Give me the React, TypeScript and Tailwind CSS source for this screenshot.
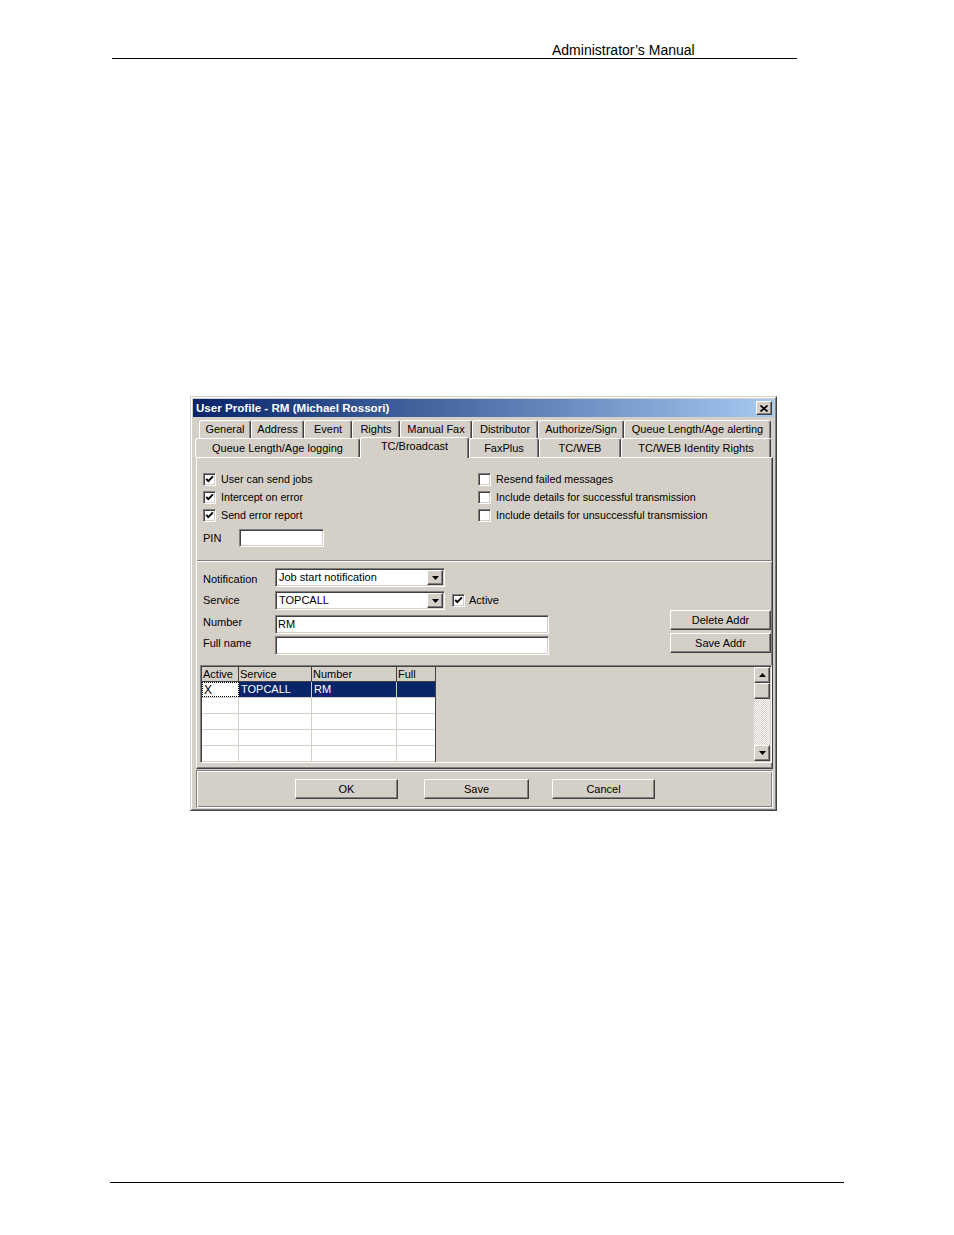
import React from "react";

const raised =
  "border border-t-white border-l-white border-r-[#404040] border-b-[#404040] shadow-[inset_-1px_-1px_0_#808080]";
const sunken =
  "border border-t-[#808080] border-l-[#808080] border-r-white border-b-white shadow-[inset_1px_1px_0_#404040,inset_-1px_-1px_0_#d4d0c8]";

function Check({ checked }: { checked?: boolean }) {
  return (
    <div className={`w-[13px] h-[13px] bg-white shrink-0 flex items-center justify-center ${sunken}`}>
      {checked && (
        <svg width="9" height="9" viewBox="0 0 9 9">
          <path d="M1.2 3.8 L3.3 6.1 L7.9 1.4" stroke="#000" strokeWidth="1.9" fill="none" />
        </svg>
      )}
    </div>
  );
}

function DownTri() {
  return (
    <svg width="7" height="4" viewBox="0 0 7 4">
      <path d="M0 0 H7 L3.5 4 Z" fill="#000" />
    </svg>
  );
}
function UpTri() {
  return (
    <svg width="7" height="4" viewBox="0 0 7 4">
      <path d="M0 4 H7 L3.5 0 Z" fill="#000" />
    </svg>
  );
}

function Combo({ value }: { value: string }) {
  return (
    <div className={`h-[19px] w-[170px] bg-white flex items-stretch p-[1px] ${sunken}`}>
      <div className="flex-1 pl-[2px] flex items-center text-[11px] leading-none">{value}</div>
      <div className={`w-[16px] bg-[#d4d0c8] flex items-center justify-center ${raised}`}>
        <DownTri />
      </div>
    </div>
  );
}

function Btn({ label, w }: { label: string; w: string }) {
  return (
    <div className={`${w} h-[20px] bg-[#d4d0c8] flex items-center justify-center text-[11px] leading-none ${raised}`}>
      {label}
    </div>
  );
}

const row1 = [
  { l: "General", w: "w-[52px]" },
  { l: "Address", w: "w-[53px]" },
  { l: "Event", w: "w-[48px]" },
  { l: "Rights", w: "w-[48px]" },
  { l: "Manual Fax", w: "w-[72px]" },
  { l: "Distributor", w: "w-[66px]" },
  { l: "Authorize/Sign", w: "w-[86px]" },
  { l: "Queue Length/Age alerting", w: "w-[147px]" },
];
const row2 = [
  { l: "Queue Length/Age logging", w: "w-[165px]", sel: false },
  { l: "TC/Broadcast", w: "w-[109px]", sel: true },
  { l: "FaxPlus", w: "w-[70px]", sel: false },
  { l: "TC/WEB", w: "w-[82px]", sel: false },
  { l: "TC/WEB Identity Rights", w: "w-[150px]", sel: false },
];

const tabBase =
  "h-full flex items-center justify-center text-[11px] leading-none border-t border-l border-r border-t-white border-l-white border-r-[#404040] shadow-[inset_-1px_0_0_#808080] rounded-t-[3px] bg-[#d4d0c8]";

export default function App() {
  return (
    <div className="w-[954px] h-[1235px] bg-white flex flex-col font-['Liberation_Sans',Arial,sans-serif] text-black">
      {/* page header */}
      <div className="pt-[42px] ml-[112px] w-[685px] border-b border-black">
        <div className="pl-[440px] h-[16px] text-[14px] leading-[16px]">Administrator’s Manual</div>
      </div>

      {/* dialog */}
      <div className="mt-[337px] ml-[190px] w-[587px] h-[415px] bg-[#d4d0c8] border border-t-[#d4d0c8] border-l-[#d4d0c8] border-r-[#404040] border-b-[#404040]">
        <div className="w-full h-full border border-t-white border-l-white border-r-[#808080] border-b-[#808080] p-[1px] flex flex-col">
          {/* title bar */}
          <div className="h-[18px] shrink-0 bg-linear-to-r from-[#0a246a] to-[#a6caf0] flex items-center">
            <div className="pl-[3px] text-white font-bold text-[11.6px] leading-none flex-1">
              User Profile - RM (Michael Rossori)
            </div>
            <div className={`w-[16px] h-[14px] mr-[2px] bg-[#d4d0c8] flex items-center justify-center ${raised}`}>
              <svg width="8" height="7" viewBox="0 0 8 7">
                <path d="M0.5 0.5 L7.5 6.5 M7.5 0.5 L0.5 6.5" stroke="#000" strokeWidth="1.7" />
              </svg>
            </div>
          </div>

          {/* tabs row 1 */}
          <div className="mt-[3px] ml-[6px] h-[18px] flex shrink-0">
            {row1.map((t) => (
              <div key={t.l} className={`${t.w} ${tabBase}`}>
                {t.l}
              </div>
            ))}
          </div>
          {/* tabs row 2 */}
          <div className="ml-[2px] h-[19px] flex items-end shrink-0">
            {row2.map((t) =>
              t.sel ? (
                <div
                  key={t.l}
                  className={`${t.w} h-[21px] -mb-[1px] relative z-10 flex items-start pt-[3px] justify-center text-[11px] leading-none border-t border-l border-r border-t-white border-l-white border-r-[#404040] shadow-[inset_-1px_0_0_#808080] rounded-t-[3px] bg-[#d4d0c8]`}
                >
                  {t.l}
                </div>
              ) : (
                <div key={t.l} className={`${t.w} ${tabBase}`}>
                  {t.l}
                </div>
              )
            )}
          </div>

          {/* tab panel */}
          <div className="ml-[3px] w-[577px] h-[312px] shrink-0 bg-[#d4d0c8] border border-t-white border-l-white border-r-[#404040] border-b-[#404040] shadow-[inset_-1px_-1px_0_#808080] flex flex-col">
            {/* top section */}
            <div className="pl-[6px] pt-[12px] flex text-[10.7px] leading-none">
              <div className="w-[275px] flex flex-col">
                {["User can send jobs", "Intercept on error", "Send error report"].map((l) => (
                  <div key={l} className="h-[18px] flex items-center">
                    <Check checked />
                    <span className="ml-[5px]">{l}</span>
                  </div>
                ))}
                <div className="mt-[5px] h-[18px] flex items-center">
                  <span className="w-[36px] text-[11px]">PIN</span>
                  <div className={`w-[85px] h-[18px] bg-white ${sunken}`} />
                </div>
              </div>
              <div className="flex flex-col">
                {[
                  "Resend failed messages",
                  "Include details for successful transmission",
                  "Include details for unsuccessful transmission",
                ].map((l) => (
                  <div key={l} className="h-[18px] flex items-center">
                    <Check />
                    <span className="ml-[5px]">{l}</span>
                  </div>
                ))}
              </div>
            </div>

            {/* separator */}
            <div className="mt-[13px] h-[2px] border-t border-t-[#808080] border-b border-b-white" />

            {/* second section */}
            <div className="flex text-[11px] leading-none">
              <div className="pl-[6px] flex flex-col">
                <div className="mt-[6px] h-[19px] flex items-center">
                  <span className="w-[72px] pt-[3px]">Notification</span>
                  <Combo value="Job start notification" />
                </div>
                <div className="mt-[4px] h-[19px] flex items-center">
                  <span className="w-[72px]">Service</span>
                  <Combo value="TOPCALL" />
                  <div className="ml-[7px]">
                    <Check checked />
                  </div>
                  <span className="ml-[4px]">Active</span>
                </div>
                <div className="mt-[5px] h-[19px] flex items-center">
                  <span className="w-[72px] pb-[4px]">Number</span>
                  <div className={`w-[274px] h-[19px] bg-white flex items-center pl-[2px] ${sunken}`}>RM</div>
                </div>
                <div className="mt-[2px] h-[19px] flex items-center">
                  <span className="w-[72px] pb-[4px]">Full name</span>
                  <div className={`w-[274px] h-[19px] bg-white ${sunken}`} />
                </div>
              </div>
              <div className="ml-auto mr-[1px] pt-[48px] flex flex-col gap-[3px]">
                <Btn label="Delete Addr" w="w-[101px]" />
                <Btn label="Save Addr" w="w-[101px]" />
              </div>
            </div>

            {/* grid */}
            <div className={`mt-[10px] ml-[3px] w-[572px] h-[98px] bg-[#d4d0c8] overflow-hidden flex text-[11px] leading-none ${sunken} p-[1px]`}>
              <div className="flex flex-col border-r border-r-[#404040] self-start">
                <div className="flex h-[15px] border-b border-b-[#404040]">
                  {[
                    { l: "Active", w: "w-[37px]" },
                    { l: "Service", w: "w-[73px]" },
                    { l: "Number", w: "w-[85px]" },
                    { l: "Full", w: "w-[38px]" },
                  ].map((c, i) => (
                    <div
                      key={c.l}
                      className={`${c.w} h-full flex items-center pl-[1px] bg-[#d4d0c8] ${i < 3 ? "border-r border-r-[#404040]" : ""}`}
                    >
                      {c.l}
                    </div>
                  ))}
                </div>
                {/* selected row */}
                <div className="flex h-[16px] border-b border-b-[#d4d0c8]">
                  <div className="w-[37px] h-full bg-white border border-dotted border-black flex items-center pl-[1px] text-[12px]">
                    X
                  </div>
                  <div className="w-[73px] h-full bg-[#0a246a] text-white flex items-center pl-[2px] border-r border-r-[#d4d0c8]">
                    TOPCALL
                  </div>
                  <div className="w-[85px] h-full bg-[#0a246a] text-white flex items-center pl-[2px] border-r border-r-[#d4d0c8]">
                    RM
                  </div>
                  <div className="w-[38px] h-full bg-[#0a246a]" />
                </div>
                {[0, 1, 2, 3].map((r) => (
                  <div key={r} className="flex h-[16px] border-b border-b-[#d4d0c8] bg-white">
                    <div className="w-[37px] h-full border-r border-r-[#d4d0c8]" />
                    <div className="w-[73px] h-full border-r border-r-[#d4d0c8]" />
                    <div className="w-[85px] h-full border-r border-r-[#d4d0c8]" />
                    <div className="w-[38px] h-full" />
                  </div>
                ))}
              </div>
              <div className="flex-1" />
              {/* scrollbar */}
              <div className="w-[16px] h-full flex flex-col">
                <div className={`h-[16px] bg-[#d4d0c8] flex items-center justify-center ${raised}`}>
                  <UpTri />
                </div>
                <div className={`h-[16px] bg-[#d4d0c8] ${raised}`} />
                <div className="flex-1 bg-[image:repeating-conic-gradient(#ffffff_0%_25%,#d4d0c8_0%_50%)] bg-[length:2px_2px]" />
                <div className={`h-[16px] bg-[#d4d0c8] flex items-center justify-center ${raised}`}>
                  <DownTri />
                </div>
              </div>
            </div>
          </div>

          {/* bottom button bar */}
          <div className="mt-[1px] ml-[3px] w-[577px] h-[38px] shrink-0 border border-t-[#808080] border-l-[#808080] border-r-white border-b-white shadow-[inset_1px_1px_0_#ffffff,inset_-1px_-1px_0_#808080] flex items-start pt-[8px] text-[11px]">
            <div className="ml-[98px]">
              <Btn label="OK" w="w-[103px]" />
            </div>
            <div className="ml-[26px]">
              <Btn label="Save" w="w-[105px]" />
            </div>
            <div className="ml-[23px]">
              <Btn label="Cancel" w="w-[103px]" />
            </div>
          </div>
        </div>
      </div>

      {/* page footer */}
      <div className="mt-[371px] ml-[110px] w-[734px] border-t border-black" />
    </div>
  );
}
